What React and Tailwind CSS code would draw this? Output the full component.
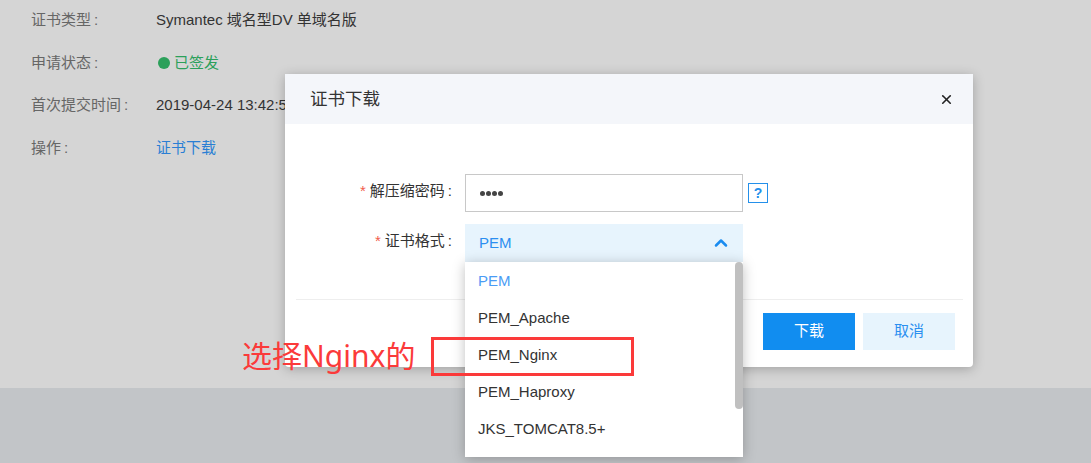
import React from "react";
import { X, ChevronUp } from "lucide-react";

const font = "font-['Liberation_Sans','Noto_Sans_CJK_SC',sans-serif]";

const infoRows = [
  { label: "证书类型", value: "Symantec 域名型DV 单域名版" },
  { label: "申请状态", status: "已签发" },
  { label: "首次提交时间", value: "2019-04-24 13:42:53" },
  { label: "操作", link: "证书下载" },
];

const formats = ["PEM", "PEM_Apache", "PEM_Nginx", "PEM_Haproxy", "JKS_TOMCAT8.5+"];

const App = () => {
  return (
    <div className={`relative h-[463px] w-[1091px] overflow-hidden bg-[#c2c5c8] text-[15px] ${font}`}>
      {/* Page behind the overlay */}
      <div className="flex h-[388px] flex-col bg-[#d5d5d5] pl-[31px]">
        <div className="-mt-px flex flex-col">
          {infoRows.map((row) => (
            <div key={row.label} className="flex h-[42.7px] items-center">
              <span className="w-[125px] text-[#666666]">
                {row.label}
                <span className="ml-[3px]">:</span>
              </span>
              {row.value && <span className="text-[#333333]">{row.value}</span>}
              {row.status && (
                <span className="flex items-center gap-1 text-[#2ba05a]">
                  <span className="ml-0.5 h-3 w-3 rounded-full bg-[#2ba05a]"></span>
                  {row.status}
                </span>
              )}
              {row.link && <span className="text-[#2a7fd4]">{row.link}</span>}
            </div>
          ))}
        </div>
      </div>

      {/* Modal */}
      <div className="absolute left-[285px] top-[74px] h-[293px] w-[688px] rounded-b-[4px] bg-white shadow-[0_2px_12px_rgba(0,0,0,0.25)]">
        <div className="flex h-[50px] items-center justify-between bg-[#f4f6fa] pl-[25px] pr-[19px]">
          <span className="text-[17.5px] text-[#333333]">证书下载</span>
          <X size={15} strokeWidth={2.6} className="text-[#222222]" />
        </div>

        <div className="flex flex-col gap-3 pt-[50px]">
          <div className="flex h-[38px] items-center">
            <label className="w-[167px] pb-1 text-right text-[#333333]">
              <span className="mr-1 text-[#f25c4a]">*</span>解压缩密码<span className="ml-[3px]">:</span>
            </label>
            <div className="ml-[13px] flex h-[38px] w-[278px] items-center border border-[#c8c8c8] pl-[14px]">
              <span className="flex gap-px">
                <span className="h-[5px] w-[5px] rounded-full bg-[#444444]"></span>
                <span className="h-[5px] w-[5px] rounded-full bg-[#444444]"></span>
                <span className="h-[5px] w-[5px] rounded-full bg-[#444444]"></span>
                <span className="h-[5px] w-[5px] rounded-full bg-[#444444]"></span>
              </span>
            </div>
            <div className="ml-[5px] flex h-5 w-5 items-center justify-center border border-[#2490ea] text-[14px] font-bold text-[#2490ea]">
              ?
            </div>
          </div>

          <div className="flex h-[38px] items-center">
            <label className="w-[167px] pb-1 text-right text-[#333333]">
              <span className="mr-1 text-[#f25c4a]">*</span>证书格式<span className="ml-[3px]">:</span>
            </label>
            <div className="relative ml-[13px] h-[38px] w-[278px]">
              <div className="flex h-full items-center justify-between bg-[#e7f4fd] pl-[14px] pr-[12px] text-[#2b8ff0]">
                <span>PEM</span>
                <ChevronUp size={20} strokeWidth={3} className="text-[#1a8cf0]" />
              </div>
              {/* Open dropdown */}
              <div className="absolute left-0 top-[38px] z-10 h-[195px] w-[278px] bg-white shadow-[0_2px_12px_rgba(0,0,0,0.25)]">
                <div className="flex flex-col pt-[0.5px]">
                  {formats.map((item, index) => (
                    <div
                      key={item}
                      className={`flex h-[37px] items-center pl-[13px] ${index === 0 ? "text-[#4a9cf5]" : "text-[#333333]"}`}
                    >
                      {item}
                    </div>
                  ))}
                </div>
                <div className="absolute right-0 top-0 h-[147px] w-2 rounded-full bg-[#c0c0c0]"></div>
              </div>
            </div>
          </div>
        </div>

        <div className="ml-[11px] mr-[10px] mt-[37px] flex justify-end gap-2 border-t border-[#eeeeee] pr-2 pt-[13px]">
          <button className="h-[37px] w-[92px] bg-[#118df0] text-white">下载</button>
          <button className="h-[37px] w-[92px] bg-[#e7f4fd] text-[#2b8ff0]">取消</button>
        </div>
      </div>

      {/* Red annotation */}
      <div className="absolute left-[242px] top-[335px] z-20 font-['Noto_Sans','Noto_Sans_CJK_SC',sans-serif] text-[30px] leading-[42px] text-[#fb3a3a]">
        选择Nginx的
      </div>
      <div className="absolute left-[431px] top-[337px] z-20 h-[39px] w-[203px] border-[3px] border-[#fb3a3a]"></div>
    </div>
  );
};

export default App;
